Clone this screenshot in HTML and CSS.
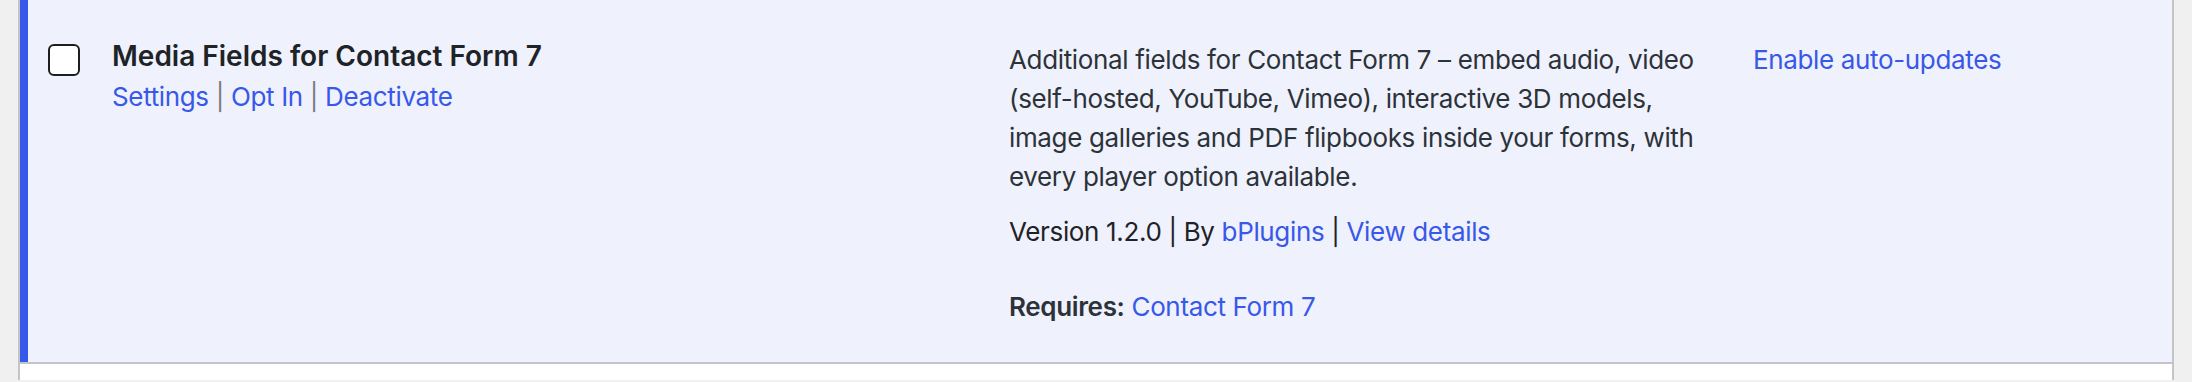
FILE: index.html
```html
<!DOCTYPE html>
<html lang="en">

<head>
    <meta charset="UTF-8">
    <meta name="viewport" content="width=device-width, initial-scale=1.0">
    <title>Plugins</title>
    <link rel="stylesheet" href="styles.css">
</head>

<body>
    <div class="plugins">
        <div class="plugin active">
            <div class="check-column">
                <input type="checkbox" class="cb" aria-label="Select Media Fields for Contact Form 7">
            </div>
            <div class="plugin-title">
                <strong>Media Fields for Contact Form 7</strong>
                <div class="row-actions">
                    <a href="#">Settings</a><span class="sep"> | </span><a href="#">Opt In</a><span class="sep"> | </span><a href="#">Deactivate</a>
                </div>
            </div>
            <div class="column-description">
                <p class="desc">Additional fields for Contact Form 7 – embed audio, video (self-hosted, YouTube, Vimeo), interactive 3D models, image galleries and PDF flipbooks inside your forms, with every player option available.</p>
                <p class="version">Version 1.2.0 | By <a href="#">bPlugins</a> | <a href="#">View details</a></p>
                <p class="requires"><strong>Requires:</strong> <a href="#">Contact Form 7</a></p>
            </div>
            <div class="column-auto-updates">
                <a href="#">Enable auto-updates</a>
            </div>
        </div>
        <div class="plugin next"></div>
    </div>
</body>

</html>
```

FILE: styles.css
```css
* {
    padding: 0;
    margin: 0;
    box-sizing: border-box;
}

body {
    background: #f0f0f1;
    font-family: Inter, "Liberation Sans", sans-serif;
    font-size: 26px;
    line-height: 39px;
    letter-spacing: -0.35px;
    color: #2c3338;
}

a {
    color: #3858e9;
    text-decoration: none;
}

.plugins {
    width: 2156px;
    margin-left: 18px;
    border-left: 2px solid #c3c4c7;
    border-right: 2px solid #c3c4c7;
}

.plugin {
    display: grid;
    grid-template-columns: 64px 897px 744px 1fr;
}

.plugin.active {
    background: #eff1fc;
    border-left: 8px solid #3858e9;
    height: 362px;
}

.plugin.next {
    background: #fff;
    border-top: 2px solid #c3c4c7;
    height: 18px;
}

.check-column {
    padding: 44px 0 0 20px;
}

.check-column .cb {
    appearance: none;
    display: block;
    width: 32px;
    height: 32px;
    border: 2px solid #1e1e1e;
    border-radius: 6px;
    background: #fff;
}

.plugin-title {
    padding: 36px 20px 0;
}

.plugin-title strong {
    display: block;
    font-size: 28px;
    line-height: 41px;
    font-weight: 600;
    letter-spacing: 0;
    color: #1d2327;
}

.row-actions .sep {
    color: #787c82;
}

.column-description {
    padding: 40px 20px 0;
}

.column-description .version {
    margin-top: 16px;
    color: #1d2327;
}

.column-description .requires {
    margin-top: 36px;
}

.column-description .requires strong {
    font-weight: 600;
}

.column-auto-updates {
    padding: 40px 20px 0;
}
```
